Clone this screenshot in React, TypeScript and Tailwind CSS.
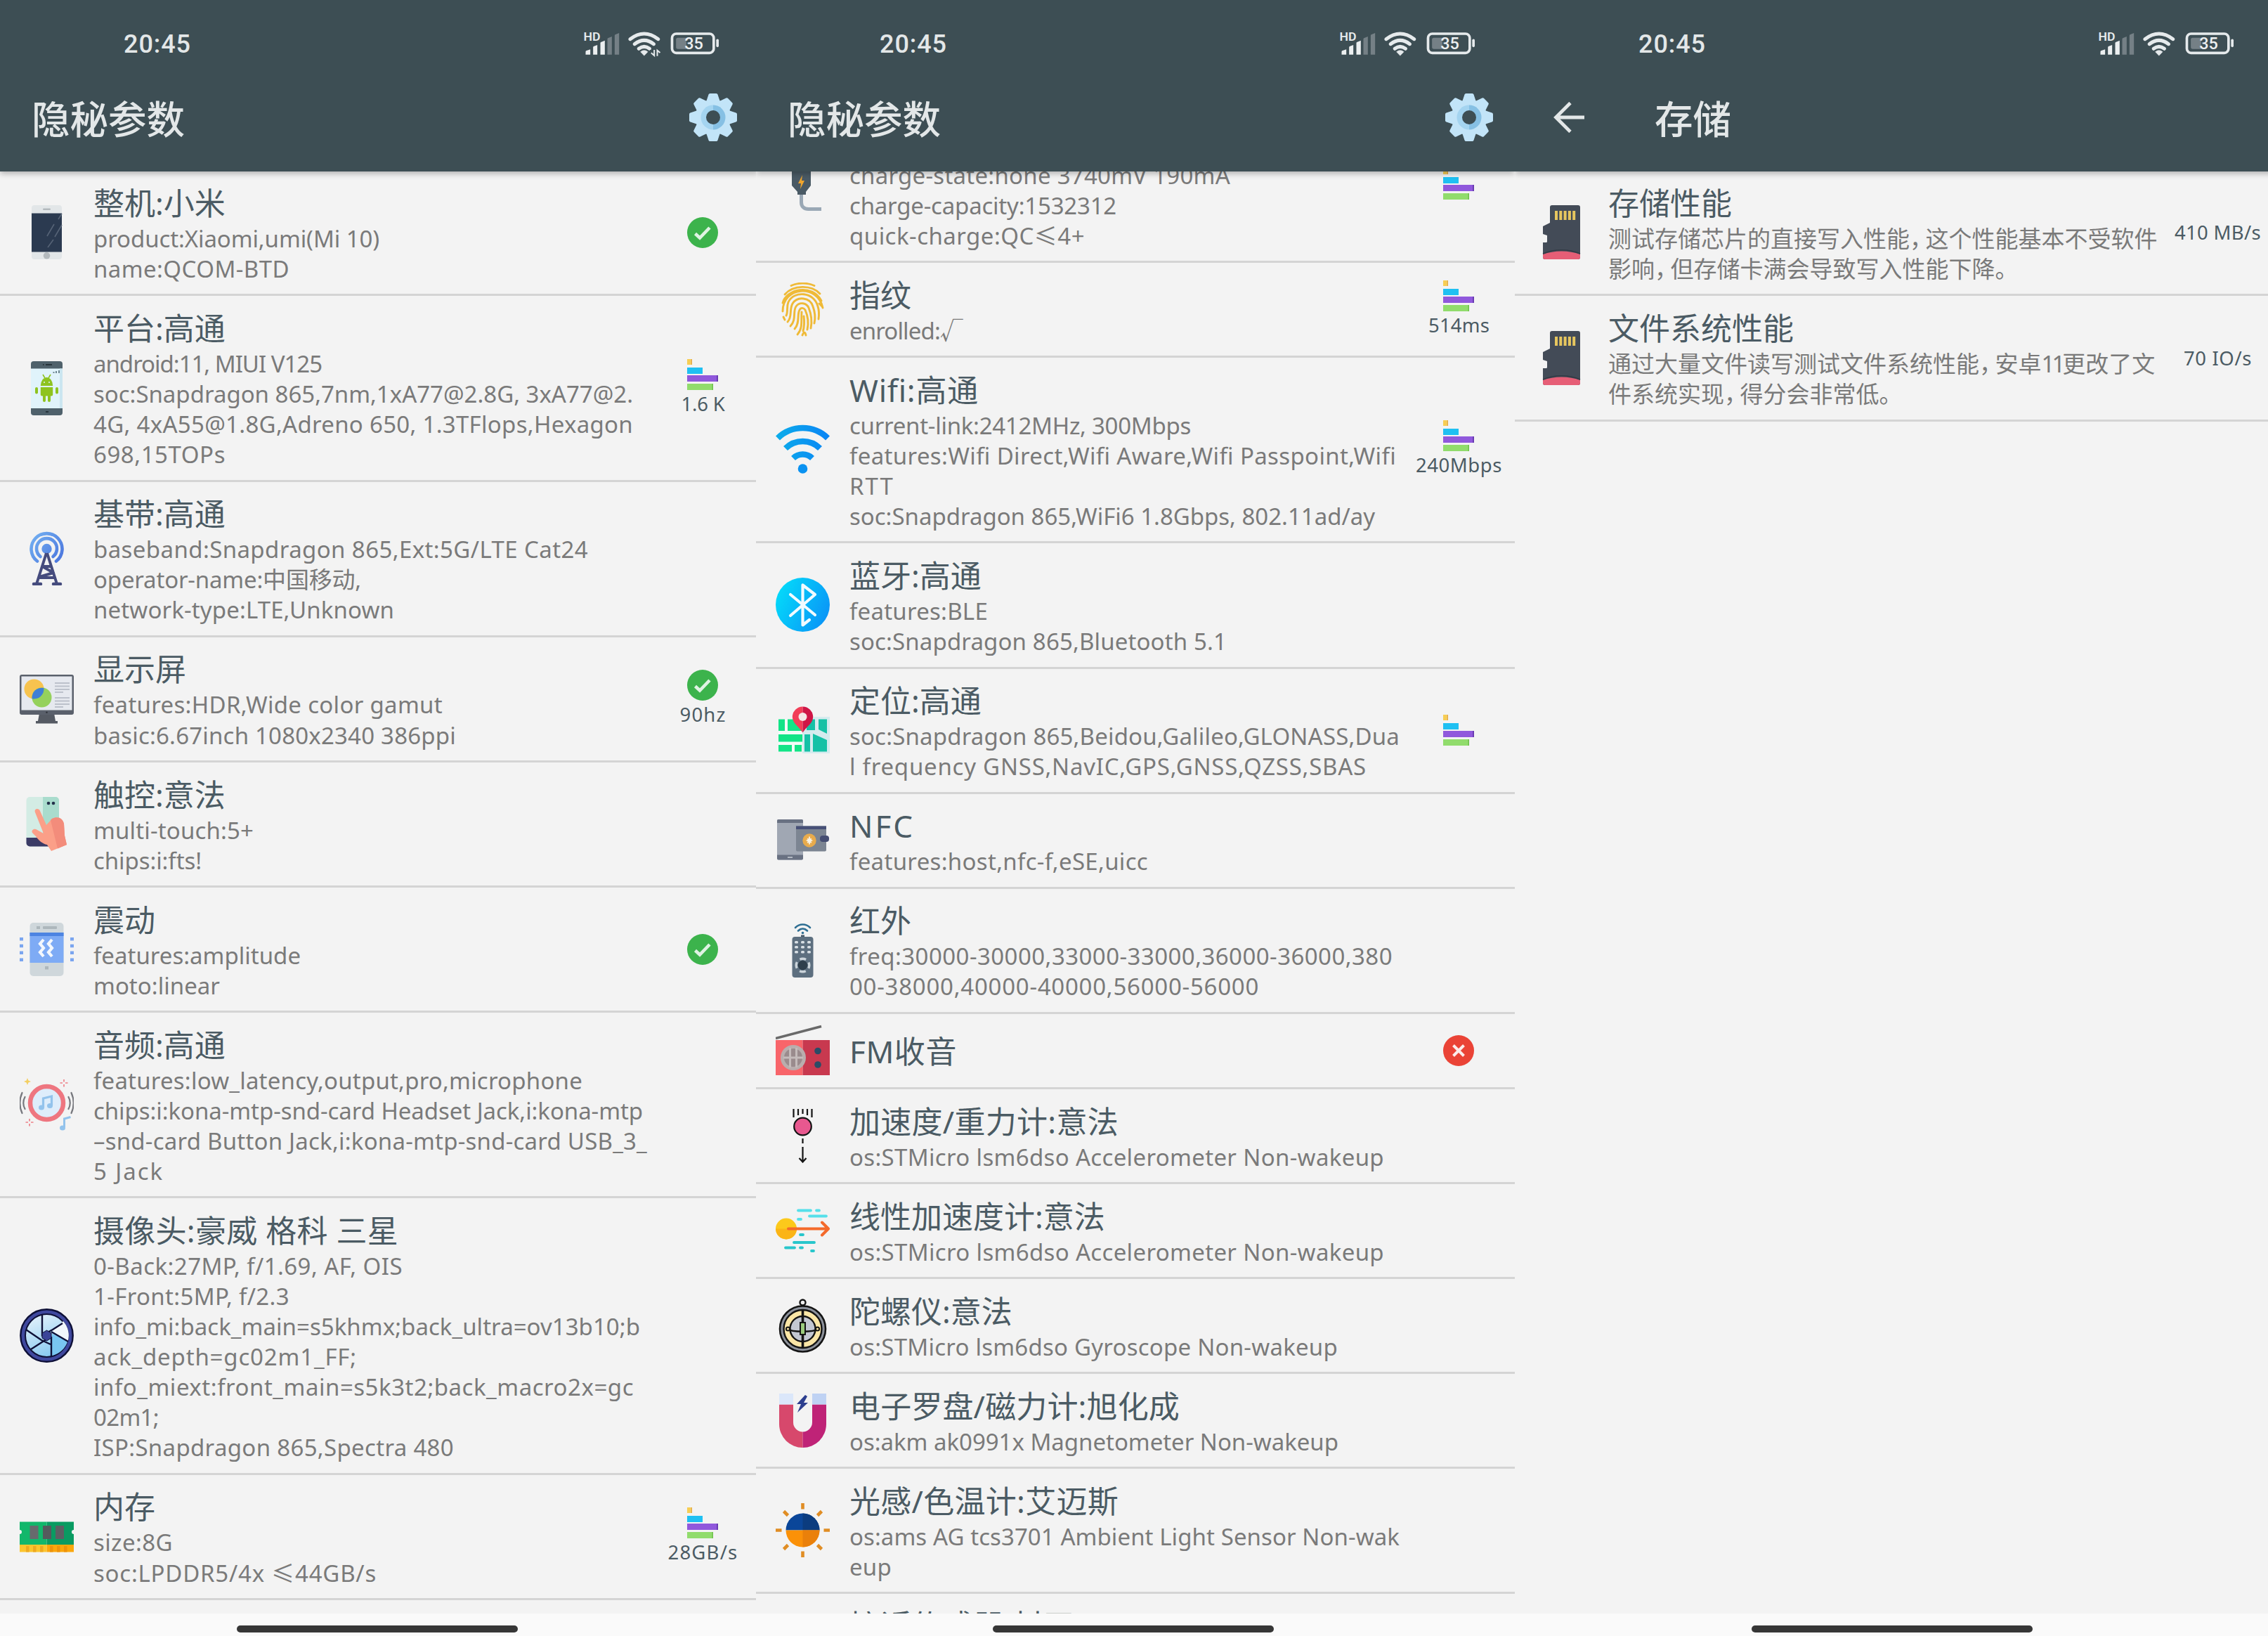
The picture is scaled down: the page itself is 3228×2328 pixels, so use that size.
import React, { useLayoutEffect, useRef, useState } from "react";

const SANS = "font-['Noto_Sans','Noto_Sans_CJK_SC',sans-serif]";

/* A single line of text whose tracking is adjusted so that it spans `width` pixels. */
function FitLine({ text, width, className = "" }: { text: string; width: number; className?: string }) {
  const ref = useRef<HTMLSpanElement>(null);
  const [tracking, setTracking] = useState(0);
  useLayoutEffect(() => {
    const el = ref.current;
    if (!el) return;
    el.style.letterSpacing = "0px";
    const natural = el.getBoundingClientRect().width;
    const value = (width - natural) / text.length;
    el.style.letterSpacing = `${value}px`;
    setTracking(value);
  }, [text, width]);
  return (
    <span ref={ref} className={`inline-block whitespace-pre ${className}`} style={{ letterSpacing: `${tracking}px` }}>
      {text}
    </span>
  );
}

/* Chinese running text with the narrower comma and digits that the system font uses. */
function HanLine({ text }: { text: string }) {
  return (
    <span className="whitespace-nowrap">
      {text.split(/(，|11)/).map((part, i) => {
        if (part === "，")
          return (
            <span key={i} className="mr-[6px] [font-feature-settings:'halt']">
              {part}
            </span>
          );
        if (part === "11")
          return (
            <span key={i} className="tracking-[-4px]">
              {part}
            </span>
          );
        return part;
      })}
    </span>
  );
}

/* ---------- row icons, all on a 77 x 77 grid ---------- */

function Svg({ children }: { children: React.ReactNode }) {
  return (
    <svg viewBox="0 0 77 77" className="block size-[77px] shrink-0" fill="none">
      {children}
    </svg>
  );
}

const PhoneIcon = () => (
  <Svg>
    <rect x="17" y="0" width="43" height="77" rx="4" fill="#e2e6e8" />
    <rect x="17" y="11.5" width="43" height="55" fill="#2b3a50" />
    <rect x="33" y="4.5" width="11" height="2.6" rx="1.3" fill="#b3b9bd" />
    <circle cx="38.5" cy="71.8" r="4.8" fill="#b3b9bd" />
    <path d="M39 44 49 27M55 20l5-8M50 45l10-17M40 60l8-11" stroke="#566376" strokeWidth="1.6" />
  </Svg>
);

const AndroidIcon = () => (
  <Svg>
    <rect x="16" y="0" width="45" height="77" rx="4" fill="#4f616b" />
    <rect x="16" y="10.5" width="45" height="56.5" fill="#e0f3fb" />
    <rect x="57" y="10.5" width="4" height="56.5" fill="#cbe6f0" />
    <path d="M37 5h9M33 5h1.500M37 72h4" stroke="#27343b" strokeWidth="2" />
    <path d="M48.500 17v-2M52 17v-3M56 17v-4" stroke="#6d8691" strokeWidth="2" />
    <path d="M29.800 35a8.700 12 0 0 1 17.400 0Z" fill="#8ec31f" />
    <path d="m33 19 3 5M44 19l-3 5" stroke="#8ec31f" strokeWidth="1.600" />
    <circle cx="35" cy="30" r="1" fill="#e0f3fb" />
    <circle cx="42" cy="30" r="1" fill="#e0f3fb" />
    <path d="M29.800 37h17.400v10.500a2 2 0 0 1-2 2H44V56a1.800 1.800 0 0 1-4 0v-6.500h-3V56a1.800 1.800 0 0 1-4 0v-6.500h-1.200a2 2 0 0 1-2-2Z" fill="#8ec31f" />
    <rect x="22" y="37" width="4" height="9.500" rx="2" fill="#8ec31f" />
    <rect x="51" y="37" width="4" height="9.500" rx="2" fill="#8ec31f" />
  </Svg>
);

const AntennaIcon = () => (
  <Svg>
    <defs>
      <linearGradient id="antenna" x1="14" y1="0" x2="63" y2="40" gradientUnits="userSpaceOnUse">
        <stop stopColor="#76b5f3" />
        <stop offset="1" stopColor="#4a74dd" />
      </linearGradient>
    </defs>
    <g stroke="url(#antenna)" strokeWidth="4.600" strokeLinecap="round">
      <path d="M25 42.500a22 22 0 1 1 27 0" />
      <path d="M29.500 36a14.500 14.500 0 1 1 18 0" />
    </g>
    <circle cx="38.500" cy="25" r="7.200" fill="url(#antenna)" />
    <path d="M38 31 24 75M39 31l14 44M32 50h13M34 51l14 8-20 6M27 66h24" stroke="#454b7d" strokeWidth="4" strokeLinejoin="round" />
    <path d="M20 75h10M48 75h10" stroke="#454b7d" strokeWidth="4.500" strokeLinecap="round" />
  </Svg>
);

const MonitorIcon = () => (
  <Svg>
    <path d="M28 59h21l2 11h3v3.500H23V70h3Z" fill="#555a63" />
    <rect x="0" y="4" width="77" height="57" rx="3" fill="#5a606b" />
    <rect x="2.500" y="6.500" width="72" height="48" fill="#e6e9ef" />
    <circle cx="20.500" cy="24.500" r="14" fill="#f7c34f" />
    <circle cx="31.500" cy="36.500" r="14" fill="#95d15c" />
    <path d="M34.400 23a14 14 0 0 1-16.800 15.200 14 14 0 0 1 16.800-15.200Z" fill="#3f7fd6" />
    <path d="M50 16h21M50 20.500h21M50 25h21M50 29h12M50 37h21M50 41.500h21M50 46h21M50 50h12" stroke="#bcc1cb" strokeWidth="1.800" />
    <circle cx="38.500" cy="57.800" r="1.300" fill="#30343b" />
  </Svg>
);

const TouchIcon = () => (
  <Svg>
    <rect x="9.500" y="0" width="46.500" height="70.500" rx="5" fill="#d3ece4" />
    <path d="M33 0h18a5 5 0 0 1 5 5v53H33Z" fill="#a9dccd" />
    <path d="M9.500 58H50v12.500H14.500a5 5 0 0 1-5-5Z" fill="#3b3b66" />
    <circle cx="41" cy="9" r="2.300" fill="#23314a" />
    <circle cx="48" cy="9" r="2.300" fill="#23314a" />
    <path d="M22 22c-2-5 5-7 7-2l9 20 8-9c8-4 15-1 17 7l1 17 3 13-22 9-6-9c-6-1-12-6-16-12l-5-5c-2-4 3-7 7-4l9 5Z" fill="#fb9f88" />
    <path d="m44 33 2-2c8-4 15-1 17 7l1 17 3 13-13 5.500Z" fill="#f38c7b" />
  </Svg>
);

const VibrateIcon = () => (
  <Svg>
    <rect x="14.500" y="1" width="48" height="76" rx="5" fill="#cfd7db" />
    <rect x="14.500" y="15" width="48" height="43" fill="#7eabf5" />
    <rect x="14.500" y="15" width="48" height="5" fill="#4d84e2" />
    <rect x="24" y="6" width="5" height="4" fill="#adb7bc" />
    <rect x="33" y="6" width="20" height="4" rx="1" fill="#adb7bc" />
    <rect x="36" y="63" width="5" height="4.500" fill="#adb7bc" />
    <path d="m34 25-5 6 5 6-5 6 5 6M46 25l-5 6 5 6-5 6 5 6" stroke="#f4f8fd" strokeWidth="4.200" />
    <path d="M2.500 22v36M74.500 22v36" stroke="#7aa5ef" strokeWidth="5" strokeDasharray="4.500 5.300" />
  </Svg>
);

const AudioIcon = () => (
  <Svg>
    <circle cx="38.500" cy="36.500" r="23.500" fill="#deedfb" stroke="#ee7680" strokeWidth="6.500" />
    <path d="M33.500 43V30l12-3v13" stroke="#93c3ec" strokeWidth="3.200" />
    <ellipse cx="31" cy="43" rx="4" ry="3.500" fill="#93c3ec" />
    <ellipse cx="43" cy="40.500" rx="4" ry="3.500" fill="#93c3ec" />
    <path d="M7.500 28c-3 5-3 12 0 17M3.500 22c-4 9-4 20 0 29M69.500 28c3 5 3 12 0 17M73.500 22c4 9 4 20 0 29" stroke="#77787e" strokeWidth="2.200" strokeLinecap="round" />
    <path d="m11 1 1.400 3.600L16 6l-3.600 1.400L11 11l-1.400-3.600L6 6l3.600-1.400Z" fill="#f3cf63" />
    <path d="M63 3v3.500M63 10v3.500M57.500 8H61M65 8h3.500M14 59v3.500M14 66v3.500M8.500 64H12M16 64h3.500" stroke="#ee8088" strokeWidth="1.700" />
    <path d="M63.500 71V59l9-2.500" stroke="#93c3ec" strokeWidth="3" />
    <ellipse cx="61" cy="72" rx="4" ry="3.500" fill="#93c3ec" />
  </Svg>
);

const ShutterIcon = () => (
  <Svg>
    <defs>
      <linearGradient id="shutter" x1="20" y1="10" x2="45" y2="70" gradientUnits="userSpaceOnUse">
        <stop stopColor="#e2f1fb" />
        <stop offset="1" stopColor="#84c8f0" />
      </linearGradient>
    </defs>
    <circle cx="38.500" cy="38.500" r="34.200" stroke="#3f489e" strokeWidth="7" />
    <circle cx="38.500" cy="38.500" r="37.200" stroke="#0e1037" strokeWidth="2.400" />
    <circle cx="38.500" cy="38.500" r="30.500" fill="url(#shutter)" stroke="#0e1037" strokeWidth="2" />
    <path d="m46 32 16-14a30 30 0 0 1 6.500 29Z" fill="#f1f7fc" />
    <path d="m46 36 22.500 10A30 30 0 0 1 46 67Z" fill="#79c6f1" />
    <path d="M32 8v30l15-8 14-9M9 30l22 15 13 6M45 33l24 14M45 40v28M44 40 16 58" stroke="#0e1037" strokeWidth="2.400" />
    <path d="m38.500 31 6.500 4v7l-6.500 4-6.500-4v-7Z" fill="#3b4498" stroke="#0e1037" strokeWidth="1" />
  </Svg>
);

const RamIcon = () => (
  <Svg>
    <path d="M0 17.500h38.500V50H0V35a3 3 0 0 0 0-6Z" fill="#12b76b" />
    <path d="M38.500 17.500H77V29a3 3 0 0 0 0 6v15H38.500Z" fill="#0a9b62" />
    <path d="M0 50h38.500v10.500H0Z" fill="#fcc52e" />
    <path d="M38.500 50H77v10.500H38.500Z" fill="#fba70d" />
    <path d="M9 52v8.500h4.500V52ZM19 52v8.500h4.500V52ZM29 52v8.500h4.500V52Z" fill="#eeaa20" />
    <path d="M43 52v8.500h4.500V52ZM53 52v8.500h4.500V52ZM63 52v8.500h4.500V52Z" fill="#ee930b" />
    <rect x="14.500" y="23" width="12" height="19" fill="#676a6d" />
    <rect x="33" y="23" width="12" height="19" fill="#555a5d" />
    <rect x="51" y="23" width="12" height="19" fill="#5d5f63" />
  </Svg>
);

const ChargerIcon = () => (
  <Svg>
    <path d="M36.500 50v14c0 6 4 9.500 10 9.500h18.500" stroke="#9aa8b5" strokeWidth="5" />
    <path d="M23 16h27v24l-7 9v4H31v-4l-8-9Z" fill="#4a5a65" />
    <path d="m38 25-6 12h4l-1 8 6-12h-4Z" fill="#f0a52d" />
  </Svg>
);

const FingerprintIcon = () => (
  <Svg>
    <g stroke="#efba37" strokeWidth="2.900" strokeLinecap="round">
      <path d="M22 4.500c10-4.500 23-4.500 33 0" />
      <path d="M13 17c12-14 38-14 50-1" />
      <path d="M10 29c5-20 42-28 55-3" />
      <path d="M10 41c0-36 50-39 57-5" />
      <path d="M15 47c3-6 0-12 3-19 8-17 37-15 42 6 2 6 2 11 1 18" />
      <path d="M17 56c7-7 2-17 7-26 7-11 25-9 29 4 3 8 4 15 2 24" />
      <path d="M21 62c9-9 3-21 8-28 5-7 15-5 18 2 4 10 5 19 3 29" />
      <path d="M27 66c8-9 3-20 7-27 2-4 6-3 8 0 4 9 5 19 3 28" />
      <path d="M31 74c8-9 5-20 6-32M40 48c1 8 1 14-1 21M38 75c2-5 4-5 5 0M11 49l2 4M62 30l4 4" />
    </g>
  </Svg>
);

const WifiBlueIcon = () => (
  <Svg>
    <defs>
      <linearGradient id="wifiBlue" x1="0" y1="0" x2="77" y2="0" gradientUnits="userSpaceOnUse">
        <stop stopColor="#0cadea" />
        <stop offset="1" stopColor="#0a84f5" />
      </linearGradient>
    </defs>
    <g stroke="url(#wifiBlue)" strokeWidth="8.500">
      <path d="M3 22.500a51 51 0 0 1 71 0" />
      <path d="M14 37a35 35 0 0 1 49 0" />
      <path d="M25 51a19.500 19.500 0 0 1 27 0" />
    </g>
    <circle cx="38.500" cy="66" r="6.800" fill="#0a92f1" />
  </Svg>
);

const BluetoothIcon = () => (
  <Svg>
    <defs>
      <linearGradient id="bt" x1="0" y1="20" x2="77" y2="57" gradientUnits="userSpaceOnUse">
        <stop stopColor="#04dbfa" />
        <stop offset="1" stopColor="#0a93f7" />
      </linearGradient>
    </defs>
    <circle cx="38.500" cy="38.500" r="38.500" fill="url(#bt)" />
    <path d="m21 24 35 29M21 54l35-30-17.500-13.500v57L48 60" stroke="#f2fbff" strokeWidth="4.200" strokeLinecap="round" strokeLinejoin="round" />
  </Svg>
);

const MapIcon = () => (
  <Svg>
    <path d="M38 19h39v52H38Z" fill="#d5ebee" />
    <path d="M4 22.500h34v46H4Z" fill="#f3fbf8" />
    <path d="M4 22.500h9V39H4ZM17 22.500h21V39H17ZM4 44h34v10.500H4ZM4 59h19v9.500H4ZM27 59h10v9.500H27Z" fill="#12e487" />
    <path d="M44 22.500h12V38H44ZM61 22.500h12V43L61 37ZM41 44h8v24.500h-8ZM53 43l20 9v16.500H53Z" fill="#15c1a6" />
    <path d="M38.500 4.500A14.700 14.700 0 0 0 23.800 19c0 9.500 10 14.500 14.700 22.500Z" fill="#f23e58" />
    <path d="M38.500 4.500A14.700 14.700 0 0 1 53.200 19c0 9.500-10 14.500-14.700 22.500Z" fill="#cf1546" />
    <circle cx="38.500" cy="19" r="6" fill="#f5e6e6" />
  </Svg>
);

const NfcIcon = () => (
  <Svg>
    <rect x="2" y="9" width="37" height="57.500" rx="2" fill="#a0a7b3" />
    <path d="M2 14v-3a2 2 0 0 1 2-2h33a2 2 0 0 1 2 2v3ZM2 59.500h37v5a2 2 0 0 1-2 2H4a2 2 0 0 1-2-2Z" fill="#697182" />
    <path d="M17 63h7" stroke="#b2b8c2" strokeWidth="2" />
    <path d="M29 18.500h43v34a2 2 0 0 1-2 2H31a2 2 0 0 1-2-2Z" fill="#7c8592" />
    <path d="M29 18.500h43V23H29Z" fill="#475077" />
    <rect x="63" y="32" width="13" height="9" rx="4" fill="#454d72" />
    <circle cx="48" cy="39" r="9.700" fill="#e8ab4c" />
    <path d="M48 33.500v11M45 36.500l6 2.500-6 3M51 36.500 45 39l6 3" stroke="#f8f2e4" strokeWidth="1.800" />
  </Svg>
);

const RemoteIcon = () => (
  <Svg>
    <path d="M28 6c6-6 15-6 21 0M32 10.500c4-4 9-4 13 0" stroke="#2f6f93" strokeWidth="2.600" strokeLinecap="round" />
    <circle cx="38.500" cy="13.500" r="1.800" fill="#2f6f93" />
    <rect x="36" y="16.500" width="5" height="4" fill="#4a5c6c" />
    <rect x="23.500" y="19" width="30" height="58" rx="4" fill="#5d6f7f" />
    <g fill="#d9e0e5">
      <rect x="27" y="25" width="5" height="3.500" rx="1.500" />
      <rect x="36" y="25" width="5" height="3.500" rx="1.500" />
      <rect x="45" y="25" width="5" height="3.500" rx="1.500" />
      <rect x="27" y="32" width="5" height="3.500" rx="1.500" />
      <rect x="36" y="32" width="5" height="3.500" rx="1.500" />
      <rect x="45" y="32" width="5" height="3.500" rx="1.500" />
      <rect x="27" y="39" width="5" height="3.500" rx="1.500" />
      <rect x="36" y="39" width="5" height="3.500" rx="1.500" />
      <rect x="45" y="39" width="5" height="3.500" rx="1.500" />
    </g>
    <circle cx="38.500" cy="59.500" r="9.300" stroke="#cbd4da" strokeWidth="3.400" strokeDasharray="9 5.600" strokeDashoffset="4.500" />
    <circle cx="38.500" cy="59.500" r="6.800" fill="#2f3f4c" />
  </Svg>
);

const RadioIcon = () => (
  <Svg>
    <path d="M0 21.500 65 4.500" stroke="#696969" strokeWidth="3.600" />
    <path d="M0 24h38.500v50H0Z" fill="#f8656a" />
    <path d="M38.500 24H77v50H38.500Z" fill="#c8394f" />
    <circle cx="25" cy="49" r="18" fill="#b9adad" />
    <circle cx="25" cy="49" r="13" fill="#9a8b8d" />
    <path d="M20.500 35v28M29.500 35v28M11 49h28" stroke="#c4bbbb" strokeWidth="3" />
    <circle cx="60" cy="39.500" r="4.800" fill="#2a4c66" />
    <circle cx="60" cy="59" r="4.800" fill="#2a4c66" />
  </Svg>
);

const GravityIcon = () => (
  <Svg>
    <path d="M25.500 0v12M32 0v9M38.500 0v7M45 0v9M51.500 0v12M38.500 42v7M38.500 54v21M33.500 70l5 5.500 5-5.500" stroke="#141414" strokeWidth="2.200" />
    <circle cx="38.500" cy="25" r="12.300" fill="#e8588f" stroke="#141414" strokeWidth="2.200" />
  </Svg>
);

const LinearIcon = () => (
  <Svg>
    <circle cx="15" cy="35.500" r="15" fill="#fcc91b" />
    <path d="M0 35.500h30a15 15 0 0 1-30 0Z" fill="#fbb416" />
    <path d="M18 35.500h56M66 26.500l9 9-9 9" stroke="#f46a2b" strokeWidth="4" strokeLinecap="round" strokeLinejoin="round" />
    <g strokeWidth="3.800" strokeLinecap="round">
      <path d="M32 9.500h18M58 9.500h4M48 17.500h24M32 22h4" stroke="#55e0ea" />
      <path d="M35 44h4M26 55h29M14 62.500h13M35 62.500h3M51 67h3" stroke="#28c6cb" />
    </g>
  </Svg>
);

const GyroIcon = () => (
  <Svg>
    <circle cx="38.500" cy="5.500" r="4" fill="#eee" stroke="#141414" strokeWidth="2.400" />
    <circle cx="38.500" cy="43" r="32.500" fill="#8d929c" stroke="#141414" strokeWidth="2.600" />
    <circle cx="38.500" cy="43" r="27" fill="#fbe6a6" stroke="#141414" strokeWidth="2.400" />
    <circle cx="38.500" cy="43" r="18" fill="#c3c7d2" stroke="#141414" strokeWidth="2.400" />
    <path d="M38.500 16v54" stroke="#141414" strokeWidth="3.600" />
    <path d="M16 43c8 5 37 5 45 0" stroke="#141414" strokeWidth="2.400" />
    <circle cx="17.500" cy="43" r="2.600" fill="#fbe6a6" stroke="#141414" strokeWidth="2" />
    <circle cx="59.500" cy="43" r="2.600" fill="#fbe6a6" stroke="#141414" strokeWidth="2" />
    <rect x="35" y="34" width="7" height="17" fill="#9bcb7d" stroke="#141414" strokeWidth="2" />
  </Svg>
);

const MagnetIcon = () => (
  <Svg>
    <path d="M5 15.500h20V41a13.500 13.500 0 0 0 13.500 13.500V77A33.500 33.500 0 0 1 5 43.500Z" fill="#d7486c" />
    <path d="M72 15.500H52V41a13.500 13.500 0 0 1-13.500 13.500V77A33.500 33.500 0 0 0 72 43.500Z" fill="#bf2377" />
    <path d="M5 0h20v15.500H5Z" fill="#dbe7fa" />
    <path d="M52 0h20v15.500H52Z" fill="#bfd2f3" />
    <path d="m42 2-12 13h6l-5 12 15-14h-6l5-9Z" fill="#2d3f8f" />
  </Svg>
);

const SunIcon = () => (
  <Svg>
    <path d="M14.500 38.500a24 24 0 0 1 48 0Z" fill="#0a4699" />
    <path d="M38.500 14.500a24 24 0 0 1 24 24h-24Z" fill="#0b3c7f" />
    <path d="M14.500 38.500a24 24 0 0 0 48 0Z" fill="#fb9108" />
    <path d="M38.500 62.500a24 24 0 0 0 24-24h-24Z" fill="#ea800a" />
    <path d="M38.500 0v8.500M38.500 68.500V77M0 38.500h8.500M68.500 38.500H77M11.500 11.500l6 6M59.500 59.500l6 6M11.500 65.500l6-6M59.500 17.500l6-6" stroke="#e08d24" strokeWidth="4.600" />
  </Svg>
);

const SdIcon = () => (
  <Svg>
    <path d="M25 0h37a3 3 0 0 1 3 3v71a3 3 0 0 1-3 3H15a3 3 0 0 1-3-3V53h4.500a1.500 1.500 0 0 0 1.500-1.500V43l-6-2V30l10-5V3a3 3 0 0 1 3-3Z" fill="#434b57" />
    <path d="M12 70c16-6 37-6 53 0v4a3 3 0 0 1-3 3H15a3 3 0 0 1-3-3Z" fill="#e65e76" />
    <path d="M12 69c16-7 37-7 53 0" stroke="#333b46" strokeWidth="1.600" />
    <path d="M31 8v13M37.300 8v13M43.600 8v13M49.900 8v13M56.200 8v13" stroke="#e6c65f" strokeWidth="4" />
  </Svg>
);

/* ---------- status marks at the right edge ---------- */

const BarsMark = () => (
  <svg viewBox="0 0 44 44" className="block size-[44px]">
    <path d="M0 0h5.500v8H0Z" fill="#f7ce54" />
    <path d="M5.500 0H7v8H5.500Z" fill="#e3a73a" />
    <path d="M0 12h22v9H0Z" fill="#1fc0f2" />
    <path d="M0 23h44v9H0Z" fill="#9058dc" />
    <path d="M42 23h2v9h-2Z" fill="#6a3cb2" />
    <path d="M0 35h37v9H0Z" fill="#91dc6c" />
    <path d="M35.500 35H37v9h-1.500Z" fill="#6fbf4c" />
  </svg>
);

const CheckMark = () => (
  <svg viewBox="0 0 44 44" className="block size-[44px]" fill="none">
    <circle cx="22" cy="22" r="22" fill="#3cb34c" />
    <path d="m11.500 23.500 6.500 6 14-14.500" stroke="#dff3e3" strokeWidth="4.600" />
  </svg>
);

const CrossMark = () => (
  <svg viewBox="0 0 44 44" className="block size-[44px]" fill="none">
    <circle cx="22" cy="22" r="22" fill="#ea4336" />
    <path d="m14.500 14.500 15 15M29.500 14.500l-15 15" stroke="#fbeceb" strokeWidth="4" />
  </svg>
);

const GearIcon = () => (
  <svg viewBox="-34 -34 68 68" className="block size-[68px]">
    <g fill="#c2e4f8">
      {[0, 45, 90, 135, 180, 225, 270, 315].map((a) => (
        <path key={a} d="M-10-22-6.500-32.500Q-6-34-4.500-34h9Q6-34 6.500-32.500L10-22Z" transform={`rotate(${a})`} />
      ))}
      <circle r="25.500" />
    </g>
    <path d="M0-17.500a17.500 17.500 0 0 0 0 35Z" fill="#a4d4f0" />
    <path d="M0-17.500a17.500 17.500 0 0 1 0 35Z" fill="#86c0e4" />
    <circle r="10" fill="#3d4e54" />
  </svg>
);

/* ---------- data ---------- */

type Line = [string, number];
type Mark = "bars" | "check" | "cross";
type Item = {
  icon: React.ComponentType;
  title: string;
  titleWidth?: number;
  lines?: Line[];
  han?: string[];
  mark?: Mark;
  label?: Line;
};

const device: Item[] = [
  { icon: PhoneIcon, title: "整机:小米", lines: [["product:Xiaomi,umi(Mi 10)", 403], ["name:QCOM-BTD", 275]], mark: "check" },
  {
    icon: AndroidIcon,
    title: "平台:高通",
    lines: [
      ["android:11, MIUI V125", 321],
      ["soc:Snapdragon 865,7nm,1xA77@2.8G, 3xA77@2.", 764],
      ["4G, 4xA55@1.8G,Adreno 650, 1.3TFlops,Hexagon", 764],
      ["698,15TOPs", 184],
    ],
    mark: "bars",
    label: ["1.6 K", 59],
  },
  {
    icon: AntennaIcon,
    title: "基带:高通",
    lines: [
      ["baseband:Snapdragon 865,Ext:5G/LTE Cat24", 700],
      ["operator-name:中国移动,", 377],
      ["network-type:LTE,Unknown", 424],
    ],
  },
  {
    icon: MonitorIcon,
    title: "显示屏",
    lines: [["features:HDR,Wide color gamut", 493], ["basic:6.67inch 1080x2340 386ppi", 512]],
    mark: "check",
    label: ["90hz", 63],
  },
  { icon: TouchIcon, title: "触控:意法", lines: [["multi-touch:5+", 224], ["chips:i:fts!", 150]] },
  { icon: VibrateIcon, title: "震动", lines: [["features:amplitude", 291], ["moto:linear", 176]], mark: "check" },
  {
    icon: AudioIcon,
    title: "音频:高通",
    lines: [
      ["features:low_latency,output,pro,microphone", 692],
      ["chips:i:kona-mtp-snd-card Headset Jack,i:kona-mtp", 778],
      ["–snd-card Button Jack,i:kona-mtp-snd-card USB_3_", 784],
      ["5 Jack", 96],
    ],
  },
  {
    icon: ShutterIcon,
    title: "摄像头:豪威 格科 三星",
    titleWidth: 434,
    lines: [
      ["0-Back:27MP, f/1.69, AF, OIS", 436],
      ["1-Front:5MP, f/2.3", 275],
      ["info_mi:back_main=s5khmx;back_ultra=ov13b10;b", 774],
      ["ack_depth=gc02m1_FF;", 371],
      ["info_miext:front_main=s5k3t2;back_macro2x=gc", 765],
      ["02m1;", 89],
      ["ISP:Snapdragon 865,Spectra 480", 509],
    ],
  },
  { icon: RamIcon, title: "内存", lines: [["size:8G", 109], ["soc:LPDDR5/4x ≤44GB/s", 399]], mark: "bars", label: ["28GB/s", 97] },
];

const sensors: Item[] = [
  {
    icon: ChargerIcon,
    title: "充电",
    lines: [["charge-state:none 3740mV 190mA", 538], ["charge-capacity:1532312", 376], ["quick-charge:QC≤4+", 331]],
    mark: "bars",
  },
  { icon: FingerprintIcon, title: "指纹", lines: [["enrolled:√", 157]], mark: "bars", label: ["514ms", 84] },
  {
    icon: WifiBlueIcon,
    title: "Wifi:高通",
    titleWidth: 184,
    lines: [
      ["current-link:2412MHz, 300Mbps", 482],
      ["features:Wifi Direct,Wifi Aware,Wifi Passpoint,Wifi", 774],
      ["RTT", 60],
      ["soc:Snapdragon 865,WiFi6 1.8Gbps, 802.11ad/ay", 744],
    ],
    mark: "bars",
    label: ["240Mbps", 120],
  },
  { icon: BluetoothIcon, title: "蓝牙:高通", lines: [["features:BLE", 193], ["soc:Snapdragon 865,Bluetooth 5.1", 533]] },
  {
    icon: MapIcon,
    title: "定位:高通",
    lines: [["soc:Snapdragon 865,Beidou,Galileo,GLONASS,Dua", 779], ["l frequency GNSS,NavIC,GPS,GNSS,QZSS,SBAS", 732]],
    mark: "bars",
  },
  { icon: NfcIcon, title: "NFC", titleWidth: 93, lines: [["features:host,nfc-f,eSE,uicc", 421]] },
  {
    icon: RemoteIcon,
    title: "红外",
    lines: [["freq:30000-30000,33000-33000,36000-36000,380", 769], ["00-38000,40000-40000,56000-56000", 579]],
  },
  { icon: RadioIcon, title: "FM收音", titleWidth: 153, mark: "cross" },
  { icon: GravityIcon, title: "加速度/重力计:意法", titleWidth: 383, lines: [["os:STMicro lsm6dso Accelerometer Non-wakeup", 757]] },
  { icon: LinearIcon, title: "线性加速度计:意法", lines: [["os:STMicro lsm6dso Accelerometer Non-wakeup", 757]] },
  { icon: GyroIcon, title: "陀螺仪:意法", lines: [["os:STMicro lsm6dso Gyroscope Non-wakeup", 691]] },
  { icon: MagnetIcon, title: "电子罗盘/磁力计:旭化成", titleWidth: 470, lines: [["os:akm ak0991x Magnetometer Non-wakeup", 692]] },
  { icon: SunIcon, title: "光感/色温计:艾迈斯", titleWidth: 383, lines: [["os:ams AG tcs3701 Ambient Light Sensor Non-wak", 779], ["eup", 56]] },
];

const storage: Item[] = [
  {
    icon: SdIcon,
    title: "存储性能",
    han: ["测试存储芯片的直接写入性能，这个性能基本不受软件", "影响，但存储卡满会导致写入性能下降。"],
    label: ["410 MB/s", 120],
  },
  {
    icon: SdIcon,
    title: "文件系统性能",
    han: ["通过大量文件读写测试文件系统性能，安卓11更改了文", "件系统实现，得分会非常低。"],
    label: ["70 IO/s", 94],
  },
];

/* ---------- layout ---------- */

function Row({ item }: { item: Item }) {
  const Icon = item.icon;
  return (
    <div className="flex min-h-[107.700px] w-[1080px] shrink-0 items-center border-b-[3px] border-[#d4d4d4]">
      <div className="w-[133px] shrink-0 pl-[28px]">
        <Icon />
      </div>
      <div className="w-[787px] shrink-0 pt-[18.500px] pb-[14.400px]">
        <div className="h-[56px] text-[44px] leading-[55px] whitespace-nowrap text-[#4b5b64]">
          {item.titleWidth ? <FitLine text={item.title} width={item.titleWidth} /> : item.title}
        </div>
        {item.lines?.map(([text, width]) => (
          <div key={text} className="h-[43.100px] text-[33px] leading-[43px] text-[#7a7a7a]">
            <FitLine text={text} width={width + 4} />
          </div>
        ))}
        {item.han?.map((text) => (
          <div key={text} className="h-[43.100px] text-[33px] leading-[43px] text-[#7a7a7a]">
            <HanLine text={text} />
          </div>
        ))}
      </div>
      <div className="flex w-[160px] shrink-0 flex-col items-center">
        {item.mark === "bars" && <BarsMark />}
        {item.mark === "check" && <CheckMark />}
        {item.mark === "cross" && <CrossMark />}
        {item.label && (
          <div className="h-[39px] pl-px text-[27.500px] leading-[40px] text-[#4b5b64]">
            <FitLine text={item.label[0]} width={item.label[1] + 3} />
          </div>
        )}
      </div>
    </div>
  );
}

function StatusIcons({ transfer }: { transfer?: boolean }) {
  return (
    <svg viewBox="0 0 590 120" className="block h-[40px] w-[197px] overflow-visible font-['Roboto',sans-serif]" fill="none">
      <text x="1" y="45" fontSize="48" fontWeight="600" textLength="72" lengthAdjust="spacingAndGlyphs" fill="#e6eaec">
        HD
      </text>
      <path d="M10 104V92q0-4 4-5l16-5v22ZM42 104V73q0-4 4-5l14-5v41ZM73 104V55q0-4 4-5l15-6v60Z" fill="#eceff0" />
      <path d="M103 104V38q0-4 4-5l15-6v77ZM134 104V23q0-4 4-5l15-6v92Z" fill="#758086" />
      <g stroke="#e6eaec" strokeWidth="15" strokeLinecap="round">
        <path d="M200 38q60-46 120 0" />
        <path d="M219 59q41-32 82 0" />
        <path d="M237 79q23-18 46 0" />
      </g>
      <path d="m244 92 16 17 16-17q-16-13-32 0Z" fill="#e6eaec" stroke="#e6eaec" strokeLinejoin="round" />
      {transfer && (
        <g>
          <path d="M284 84h46v30h-46Z" fill="#3d4e54" />
          <path d="M303 84v24l-13-11M316 110V86l12 10" stroke="#e6eaec" strokeWidth="6" />
        </g>
      )}
      <rect x="379" y="15" width="178" height="82" rx="18" stroke="#e6eaec" strokeWidth="11" />
      <path d="M396 40q0-8 8-8h36v48h-36q-8 0-8-8Z" fill="#758086" />
      <text x="432" y="81" fontSize="70" fontWeight="500" textLength="80" lengthAdjust="spacingAndGlyphs" fill="#eceff0">
        35
      </text>
      <path d="M573 43v24" stroke="#e6eaec" strokeWidth="11" strokeLinecap="round" />
    </svg>
  );
}

function Header({ title, back, transfer }: { title: string; back?: boolean; transfer?: boolean }) {
  return (
    <header className="relative z-10 h-[244px] w-[1080px] shrink-0 bg-[#3d4e54] text-[#e3e7e8] shadow-[0_3px_8px_rgba(0,0,0,0.28)]">
      <div className="flex h-[126px] items-center justify-between pr-[53px] pl-[176px]">
        <div className="font-['Roboto',sans-serif] text-[36px] leading-none font-medium">
          <FitLine text="20:45" width={96} />
        </div>
        <StatusIcons transfer={transfer} />
      </div>
      <div className="flex h-[82px] items-center pr-[31px] pl-[45px]">
        {back && (
          <svg viewBox="0 0 44 44" className="mr-[100px] ml-[10px] size-[44px]" fill="none" stroke="#e3e7e8" strokeWidth="4.800">
            <path d="M44 22H4M24 1.500 3.500 22 24 42.500" />
          </svg>
        )}
        <h1 className="grow pt-[4px] text-[54.500px] leading-[78px] font-medium">{title}</h1>
        {!back && <GearIcon />}
      </div>
    </header>
  );
}

function Phone({
  width,
  header,
  items,
  listOffset,
  tail,
}: {
  width: string;
  header: React.ReactNode;
  items: Item[];
  listOffset: string;
  tail?: string;
}) {
  return (
    <section className={`flex h-[2328px] shrink-0 flex-col overflow-hidden bg-[#f3f3f3] ${width}`}>
      {header}
      <div className="min-h-0 grow overflow-hidden">
        <div className={`flex flex-col ${listOffset}`}>
          {items.map((item) => (
            <Row key={item.title} item={item} />
          ))}
          {tail && <div className="h-[72px] pt-[18px] pl-[133px] text-[44px] leading-[55px] text-[#4b5b64]">{tail}</div>}
        </div>
      </div>
      <div className="flex h-[32px] w-[1080px] shrink-0 justify-center bg-[#fafafa] pt-[17px] pr-[7px]">
        <div className="h-[10px] w-[400px] rounded-full bg-[#363636]" />
      </div>
    </section>
  );
}

export default function App() {
  return (
    <main lang="zh-CN" className={`flex h-[2328px] w-[3228px] overflow-hidden bg-[#f3f3f3] ${SANS}`}>
      <Phone width="w-[1076px]" header={<Header title="隐秘参数" transfer />} items={device} listOffset="-mt-[0.600px]" />
      <Phone width="w-[1080px]" header={<Header title="隐秘参数" />} items={sensors} listOffset="-mt-[91px]" tail="接近传感器:村田" />
      <Phone width="w-[1072px]" header={<Header title="存储" back />} items={storage} listOffset="-mt-[0.600px]" />
    </main>
  );
}
